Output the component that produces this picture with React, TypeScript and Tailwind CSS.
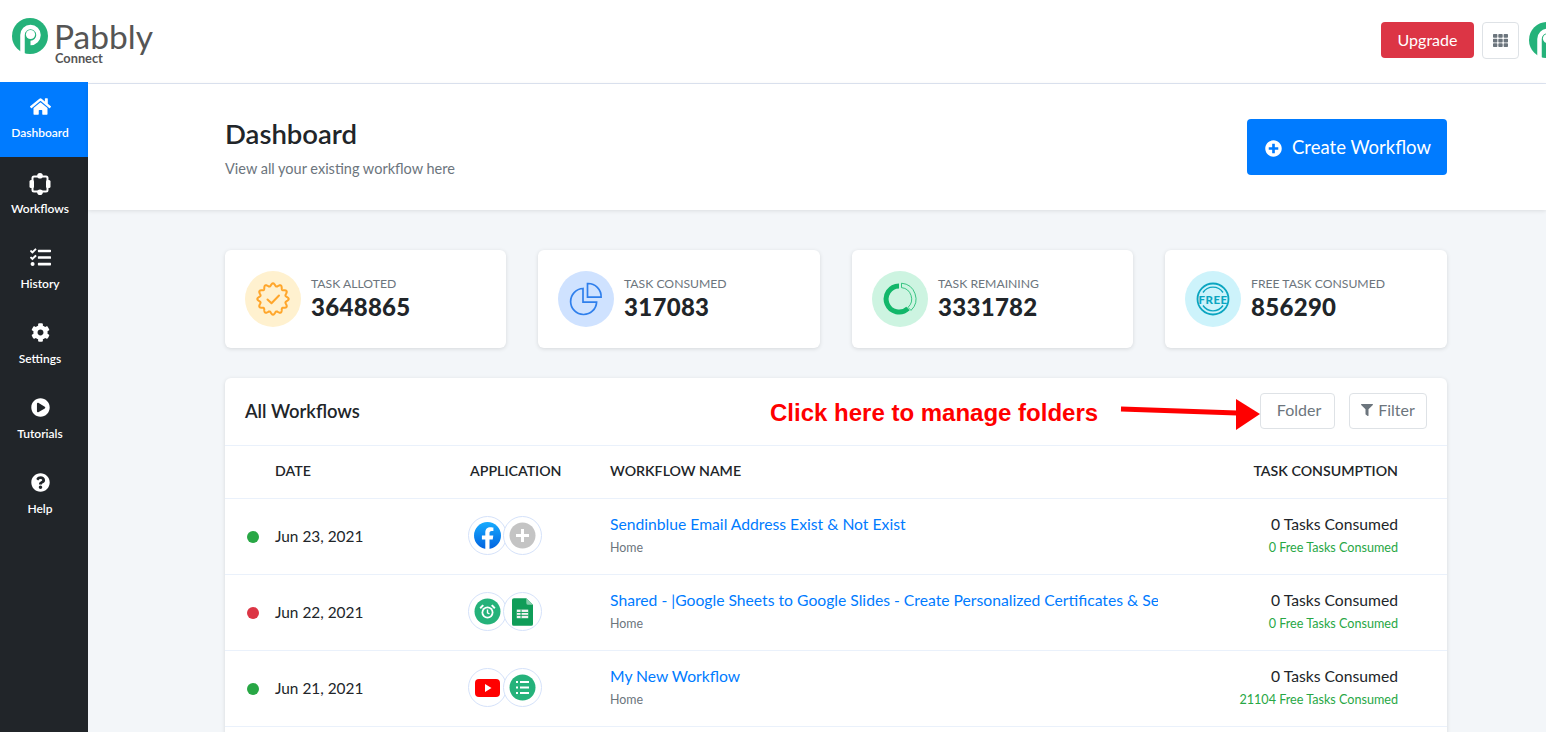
import { FaHome, FaTasks, FaCog, FaPlayCircle, FaQuestionCircle, FaPlusCircle, FaFilter, FaTh } from "react-icons/fa";
import type { ReactNode } from "react";

function PabblyMark({ size }: { size: number }) {
  return (
    <svg width={size} height={size} viewBox="0 0 36 36" className="shrink-0">
      <circle cx="18" cy="18" r="18" fill="#25b27a" />
      <path d="M10.5 36V17a8 8 0 1 1 8 8" fill="none" stroke="#fff" strokeWidth="4.5" />
      <circle cx="18.5" cy="16.5" r="4.6" fill="#fff" />
    </svg>
  );
}

function WorkflowsIcon() {
  return (
    <svg width="24" height="24" viewBox="0 0 24 24" fill="#fff" className="translate-y-[2px]">
      <rect x="4.5" y="4.5" width="15" height="15" rx="1.5" fill="none" stroke="#fff" strokeWidth="2" />
      <circle cx="12" cy="3.8" r="2.8" />
      <circle cx="12" cy="20.2" r="2.8" />
      <rect x="1.5" y="8" width="4.5" height="8" rx="1.5" />
      <rect x="18" y="8" width="4.5" height="8" rx="1.5" />
    </svg>
  );
}

// wavy outline of the "alloted" badge
function scallopPath(cx: number, cy: number, r: number, amp: number, lobes: number) {
  const pts: string[] = [];
  for (let i = 0; i < 180; i++) {
    const a = (i / 180) * Math.PI * 2;
    const rad = r + amp * Math.cos(a * lobes);
    pts.push(`${(cx + rad * Math.sin(a)).toFixed(2)} ${(cy - rad * Math.cos(a)).toFixed(2)}`);
  }
  return `M${pts.join("L")}Z`;
}

const NAV_ITEMS: { label: string; icon: ReactNode; active?: boolean }[] = [
  { label: "Dashboard", icon: <FaHome size={21} />, active: true },
  { label: "Workflows", icon: <WorkflowsIcon /> },
  { label: "History", icon: <FaTasks size={21} /> },
  { label: "Settings", icon: <FaCog size={19} /> },
  { label: "Tutorials", icon: <FaPlayCircle size={19} /> },
  { label: "Help", icon: <FaQuestionCircle size={19} /> },
];

const STATS: { label: string; value: string; bg: string; icon: ReactNode }[] = [
  {
    label: "TASK ALLOTED",
    value: "3648865",
    bg: "bg-[#fff1cf]",
    icon: (
      <svg width="34" height="34" viewBox="0 0 34 34" fill="none" stroke="#ffa62b" strokeLinejoin="round" strokeLinecap="round">
        <path d={scallopPath(17, 17, 14.3, 1.4, 12)} strokeWidth="2" />
        <path d="M11.5 17.5l4 3.8 7.500-7.800" strokeWidth="2" />
      </svg>
    ),
  },
  {
    label: "TASK CONSUMED",
    value: "317083",
    bg: "bg-[#cfe2ff]",
    icon: (
      <svg width="34" height="34" viewBox="0 0 34 34" fill="none" stroke="#2f7fec" strokeWidth="1.7">
        <path d="M14 6.5a13 13 0 1 0 13.6 13.6H14z" />
        <path d="M18.5 1.5a13 13 0 0 1 13.6 13.6H18.5z" />
      </svg>
    ),
  },
  {
    label: "TASK REMAINING",
    value: "3331782",
    bg: "bg-[#cdf4e1]",
    icon: (
      <svg width="34" height="34" viewBox="0 0 34 34" fill="none">
        <path d="M16 4a13 13 0 1 0 9 22.5" stroke="#12b76a" strokeWidth="5" />
        <path d="M18.5 1.2a15.8 15.8 0 0 1 9.5 27.2l-3-3a11.5 11.5 0 0 0-6.5-19.8z" stroke="#12b76a" strokeWidth="0.8" />
      </svg>
    ),
  },
  {
    label: "FREE TASK CONSUMED",
    value: "856290",
    bg: "bg-[#cdf3fb]",
    icon: (
      <svg width="34" height="34" viewBox="0 0 34 34" fill="none" stroke="#0ba5c0">
        <circle cx="17" cy="17" r="15.5" strokeWidth="1.8" />
        <path d="M7 10.500a12 12 0 0 1 20 0M7 23.500a12 12 0 0 0 20 0" strokeWidth="1.4" />
        <text x="17" y="21.500" textAnchor="middle" fontSize="11.500" fontWeight="900" fill="#0ba5c0" stroke="none" fontFamily="Lato, sans-serif" letterSpacing="0.4">
          FREE
        </text>
      </svg>
    ),
  },
];

function FacebookIcon() {
  return (
    <svg width="27" height="27" viewBox="0 0 27 27">
      <defs>
        <linearGradient id="fb" x1="0" y1="0" x2="0" y2="1">
          <stop offset="0" stopColor="#18acfe" />
          <stop offset="1" stopColor="#0163e0" />
        </linearGradient>
      </defs>
      <circle cx="13.5" cy="13.5" r="13.5" fill="url(#fb)" />
      <path d="M18.7 17.4l.6-3.9h-3.8V11c0-1.100.5-2.100 2.200-2.100h1.700V5.600s-1.500-.3-3-.3c-3.100 0-5.100 1.900-5.100 5.200v3H7.900v3.900h3.400V27h4.200v-9.600z" fill="#fff" />
    </svg>
  );
}

function PlusIcon() {
  return (
    <svg width="27" height="27" viewBox="0 0 27 27">
      <circle cx="13.5" cy="13.500" r="13" fill="#c4c4c4" />
      <path d="M13.500 7v13M7 13.500h13" stroke="#fff" strokeWidth="3" />
    </svg>
  );
}

function AlarmIcon() {
  return (
    <svg width="27" height="27" viewBox="0 0 27 27">
      <circle cx="13.500" cy="13.500" r="13" fill="#25b27a" />
      <circle cx="13.500" cy="14.500" r="6" fill="#fff" />
      <circle cx="13.500" cy="14.500" r="4.200" fill="#25b27a" />
      <path d="M13.500 11.500v3.300l2 1.200" fill="none" stroke="#fff" strokeWidth="1.400" />
      <path d="M5.500 9.500l3-3 1.500 1.200-3.200 3.200zM21.500 9.500l-3-3-1.500 1.200 3.200 3.200z" fill="#fff" />
    </svg>
  );
}

function SheetsIcon() {
  return (
    <svg width="21" height="28" viewBox="0 0 22 29">
      <path d="M2 0h13l7 7v20a2 2 0 0 1-2 2H2a2 2 0 0 1-2-2V2a2 2 0 0 1 2-2z" fill="#0f9d58" />
      <path d="M15 0l7 7h-5a2 2 0 0 1-2-2z" fill="#87ceac" />
      <path d="M5 12h12v9H5z" fill="#f1f1f1" />
      <path d="M5 15h12M5 18h12M9.500 12v9" stroke="#0f9d58" strokeWidth="1" />
    </svg>
  );
}

function YoutubeIcon() {
  return (
    <svg width="25" height="18" viewBox="0 0 25 18">
      <rect width="25" height="18" rx="4" fill="#f00" />
      <path d="M10 5l6.500 4-6.500 4z" fill="#fff" />
    </svg>
  );
}

function ListIcon() {
  return (
    <svg width="27" height="27" viewBox="0 0 27 27">
      <circle cx="13.500" cy="13.500" r="13" fill="#25b27a" />
      <path d="M11 8h9M11 13.500h9M11 19h9" stroke="#fff" strokeWidth="2" />
      <path d="M7 8h2M7 13.500h2M7 19h2" stroke="#fff" strokeWidth="2" />
    </svg>
  );
}

function AppBadge({ children, className }: { children: ReactNode; className?: string }) {
  return (
    <div className={`flex h-[39px] w-[39px] items-center justify-center rounded-full border border-[#d5e2fa] bg-white ${className ?? ""}`}>
      {children}
    </div>
  );
}

const ROWS = [
  {
    date: "Jun 23, 2021",
    dot: "bg-[#28a745]",
    apps: [<FacebookIcon key="a" />, <PlusIcon key="b" />],
    name: "Sendinblue Email Address Exist & Not Exist",
    free: "0 Free Tasks Consumed",
  },
  {
    date: "Jun 22, 2021",
    dot: "bg-[#dc3545]",
    apps: [<AlarmIcon key="a" />, <SheetsIcon key="b" />],
    name: "Shared - |Google Sheets to Google Slides - Create Personalized Certificates & Send via Email",
    free: "0 Free Tasks Consumed",
  },
  {
    date: "Jun 21, 2021",
    dot: "bg-[#28a745]",
    apps: [<YoutubeIcon key="a" />, <ListIcon key="b" />],
    name: "My New Workflow",
    free: "21104 Free Tasks Consumed",
  },
];

const ROW_GRID = "grid grid-cols-[30px_195px_140px_548px_1fr] items-center pl-5 pr-[49px]";

export default function App() {
  return (
    <div className="flex h-screen flex-col overflow-hidden bg-white font-['Lato',sans-serif] text-[#212529]">
      {/* Top bar */}
      <header className="flex h-[82px] shrink-0 items-start justify-between overflow-hidden">
        <div className="ml-3 mt-[18px] flex">
          <PabblyMark size={36} />
          <div className="ml-[6px] flex flex-col">
            <span className="text-[33.5px] leading-[36px] text-[#555]">Pabbly</span>
            <span className="ml-px mt-[-2px] text-[12.8px] font-bold leading-[12px] text-[#555]">Connect</span>
          </div>
        </div>
        <div className="mr-[-19px] mt-[22px] flex shrink-0 items-start">
          <button className="h-9 w-[93px] rounded-[4px] bg-[#dc3545] text-[16px] text-white">Upgrade</button>
          <button className="ml-2 flex h-[37px] w-[37px] items-center justify-center rounded-[4px] border border-[#dee2e6] text-[#6c757d]">
            <FaTh size={15} />
          </button>
          <div className="ml-[10px]">
            <PabblyMark size={36} />
          </div>
        </div>
      </header>

      <div className="flex min-h-0 flex-1">
        {/* Sidebar */}
        <aside className="w-[88px] shrink-0 bg-[#212529]">
          {NAV_ITEMS.map((item) => (
            <div
              key={item.label}
              className={`flex h-[75px] flex-col items-center pr-2 text-white ${item.active ? "bg-[#007bff] pt-[12px]" : "pt-[13px]"}`}
            >
              <div className="flex h-[24px] items-center">{item.icon}</div>
              <span className="mt-[7px] text-[12px] font-semibold leading-[16px]">{item.label}</span>
            </div>
          ))}
        </aside>

        <main className="min-w-0 flex-1 pt-px">
          <div className="h-full border-t border-[#dfe6f3] bg-[#f3f6f9]">
            {/* Page heading */}
            <div className="flex h-[126px] items-center justify-between bg-white pl-[137px] pr-[99px] shadow-[0_1px_4px_rgba(0,0,0,0.1)]">
              <div className="pt-[2px]">
                <h1 className="text-[27.5px] font-semibold leading-[32px]">Dashboard</h1>
                <p className="mt-[9px] text-[14.5px] leading-[20px] text-[#6c757d]">View all your existing workflow here</p>
              </div>
              <button className="flex h-14 w-[200px] items-center justify-center gap-[10px] rounded-[4px] bg-[#007bff] pl-[2px] pt-[2px] text-[18.5px] text-white">
                <FaPlusCircle size={17} />
                Create Workflow
              </button>
            </div>

            <div className="pl-[137px] pr-[99px] pt-10">
              {/* Stat cards */}
              <div className="grid grid-cols-[281px_282px_281px_282px] gap-8">
                {STATS.map((stat) => (
                  <div key={stat.label} className="flex h-[98px] items-center gap-[10px] rounded-[6px] bg-white pl-5 shadow-[0_1px_4px_rgba(0,0,0,0.12)]">
                    <div className={`flex h-14 w-14 items-center justify-center rounded-full ${stat.bg}`}>{stat.icon}</div>
                    <div className="pb-[2px]">
                      <div className="text-[12.2px] leading-[16px] text-[#6c757d]">{stat.label}</div>
                      <div className="mt-[1px] text-[24px] font-black leading-[28px] tracking-[0.3px]">{stat.value}</div>
                    </div>
                  </div>
                ))}
              </div>

              {/* Workflows table */}
              <div className="relative mt-[30px] rounded-[6px] bg-white shadow-[0_1px_4px_rgba(0,0,0,0.12)]">
                <div className="flex h-[68px] items-center justify-between border-b border-[#eaf1fb] px-5">
                  <h2 className="text-[18.4px] font-semibold">All Workflows</h2>
                  <div className="mt-[-2px] flex gap-[14px]">
                    <button className="h-9 w-[75px] rounded-[4px] border border-[#dee2e6] pb-px pl-[3px] text-[16px] text-[#6c757d]">Folder</button>
                    <button className="flex h-9 w-[78px] items-center justify-center gap-[5px] rounded-[4px] border border-[#dee2e6] pb-px text-[16px] text-[#6c757d]">
                      <FaFilter size={12} />
                      Filter
                    </button>
                  </div>
                </div>

                {/* Annotation over the card */}
                <span className="absolute left-[545px] top-[21px] font-['Liberation_Sans',sans-serif] text-[24px] font-bold leading-[28px] text-[#ff0000]">
                  Click here to manage folders
                </span>
                <svg className="absolute left-[895px] top-[20px]" width="145" height="34" viewBox="0 0 145 34">
                  <path d="M1 11l116 4" stroke="#f00" strokeWidth="5" />
                  <path d="M116 1l24 15-24 16z" fill="#f00" />
                </svg>

                <div className={`${ROW_GRID} h-[53px] border-b border-[#eaf1fb] pb-[2px] text-[14.2px] font-semibold`}>
                  <span />
                  <span>DATE</span>
                  <span>APPLICATION</span>
                  <span>WORKFLOW NAME</span>
                  <span className="text-right">TASK CONSUMPTION</span>
                </div>

                {ROWS.map((row) => (
                  <div key={row.date} className={`${ROW_GRID} h-[76px] border-b border-[#eaf1fb]`}>
                    <span className={`ml-[2px] h-3 w-3 rounded-full ${row.dot}`} />
                    <span className="text-[15.4px]">{row.date}</span>
                    <div className="ml-[-2px] flex pb-[2px]">
                      <AppBadge>{row.apps[0]}</AppBadge>
                      <AppBadge className="ml-[-4px]">{row.apps[1]}</AppBadge>
                    </div>
                    <div className="min-w-0 pb-[3px]">
                      <div className="overflow-hidden whitespace-nowrap text-[15.7px] leading-[20px] text-[#007bff]">{row.name}</div>
                      <div className="mt-[6px] text-[12.4px] leading-[16px] text-[#6c757d]">Home</div>
                    </div>
                    <div className="pb-[3px] text-right">
                      <div className="text-[15.7px] leading-[20px]">0 Tasks Consumed</div>
                      <div className="mt-[6px] text-[12.6px] leading-[16px] text-[#28a745]">{row.free}</div>
                    </div>
                  </div>
                ))}
                <div className="h-[76px]" />
              </div>
            </div>
          </div>
        </main>
      </div>
    </div>
  );
}
